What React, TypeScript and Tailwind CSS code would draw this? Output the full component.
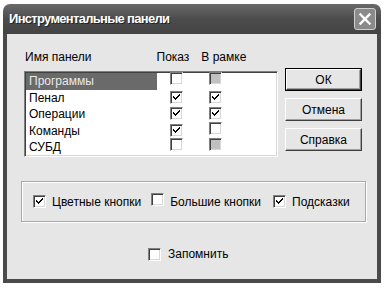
import React from 'react';

type CheckState = 'on' | 'off' | 'grey';

const Check: React.FC<{ state?: CheckState }> = ({ state = 'off' }) => (
  <span
    className={`inline-flex items-center justify-center w-[13px] h-[13px] shrink-0 border border-t-[#808080] border-l-[#808080] border-b-white border-r-white shadow-[inset_1px_1px_0_#404040,inset_-1px_-1px_0_#d8d8d8] ${
      state === 'grey' ? 'bg-[#c0c0c0]' : 'bg-white'
    }`}
  >
    {state === 'on' && (
      <svg width="9" height="9" viewBox="0 0 9 9" className="block">
        <path d="M1 3h1v1h1v1h1V4h1V3h1V2h1V1h1v2H7v1H6v1H5v1H4v1H3V6H2V5H1z" fill="#000" />
      </svg>
    )}
  </span>
);

const rows: { name: string; show: CheckState; frame: CheckState }[] = [
  { name: 'Программы', show: 'off', frame: 'grey' },
  { name: 'Пенал', show: 'on', frame: 'on' },
  { name: 'Операции', show: 'on', frame: 'on' },
  { name: 'Команды', show: 'on', frame: 'off' },
  { name: 'СУБД', show: 'off', frame: 'grey' },
];

const Btn: React.FC<{ label: string; def?: boolean }> = ({ label, def }) => (
  <div
    className={`w-[77px] h-[23px] flex items-center justify-center bg-[#e6e6e6] ${
      def ? 'border border-black' : ''
    }`}
  >
    <div className="w-full h-full flex items-center justify-center border border-t-white border-l-white border-b-[#404040] border-r-[#404040] shadow-[inset_-1px_-1px_0_#a0a0a0]">
      {label}
    </div>
  </div>
);

export default function App() {
  return (
    <div
      className="w-[384px] h-[288px] bg-white pt-[4px] pl-[3px] text-[12px] text-black"
      style={{ fontFamily: '"Liberation Sans", Arial, sans-serif' }}
    >
      <div className="w-[378px] h-[279px] flex flex-col">
        {/* Title bar */}
        <div className="h-[30px] shrink-0 rounded-t-[7px] bg-gradient-to-b from-[#6a6a6a] via-[#4c4c4c] to-[#444] flex items-center pl-[6px] pr-[5px]">
          <span className="text-white font-bold text-[13px] tracking-[-0.7px] [text-shadow:1px_1px_0_#222]">
            Инструментальные панели
          </span>
          <div className="ml-auto w-[22px] h-[22px] rounded-[3px] border border-[#d0d0d0] bg-[#8a8a8a] flex items-center justify-center">
            <svg width="14" height="14" viewBox="0 0 14 14">
              <path d="M2.5 2.5l9 9M11.5 2.5l-9 9" stroke="#fff" strokeWidth="2.4" strokeLinecap="square" />
            </svg>
          </div>
        </div>

        {/* Client area */}
        <div className="flex-1 bg-[#e6e6e6] border-x-[4px] border-b-[4px] border-[#4a4a4a] flex flex-col">
          {/* Column headers */}
          <div className="h-[14px] mt-[16px] flex items-center">
            <span className="ml-[18px]">Имя панели</span>
            <span className="ml-[65px]">Показ</span>
            <span className="ml-[12px]">В рамке</span>
          </div>

          <div className="flex items-start mt-[4px]">
            {/* List box */}
            <div className="ml-[17px] mt-[3px] w-[254px] h-[86px] bg-white border border-t-[#808080] border-l-[#808080] border-b-white border-r-white shadow-[inset_1px_1px_0_#404040,inset_-1px_-1px_0_#d8d8d8] pt-[1px] pl-[1px]">
              {rows.map((r, i) => (
                <div key={r.name} className="flex items-center h-[16.5px]">
                  <div
                    className={`w-[131px] h-full flex items-center pl-[3px] ${
                      i === 0 ? 'bg-[#6a6a6a] text-[#e8e8e8]' : ''
                    }`}
                  >
                    {r.name}
                  </div>
                  <div className="ml-[13px]">
                    <Check state={r.show} />
                  </div>
                  <div className="ml-[26px]">
                    <Check state={r.frame} />
                  </div>
                </div>
              ))}
            </div>

            {/* Buttons */}
            <div className="ml-[7px] flex flex-col gap-[7px]">
              <Btn label="ОК" def />
              <Btn label="Отмена" />
              <Btn label="Справка" />
            </div>
          </div>

          {/* Group box */}
          <div className="mx-[14px] mt-[24px] w-[345px] h-[41px] border border-[#a8a8a8] shadow-[inset_1px_1px_0_#fff,1px_1px_0_#fff] flex items-center pl-[11px]">
            <Check state="on" />
            <span className="ml-[6px]">Цветные кнопки</span>
            <span className="ml-[10px]"><Check /></span>
            <span className="ml-[6px]">Большие кнопки</span>
            <span className="ml-[12px]"><Check state="on" /></span>
            <span className="ml-[6px]">Подсказки</span>
          </div>

          {/* Remember */}
          <div className="mt-[23px] flex items-center ml-[141px]">
            <Check />
            <span className="ml-[7px]">Запомнить</span>
          </div>
        </div>
      </div>
    </div>
  );
}
